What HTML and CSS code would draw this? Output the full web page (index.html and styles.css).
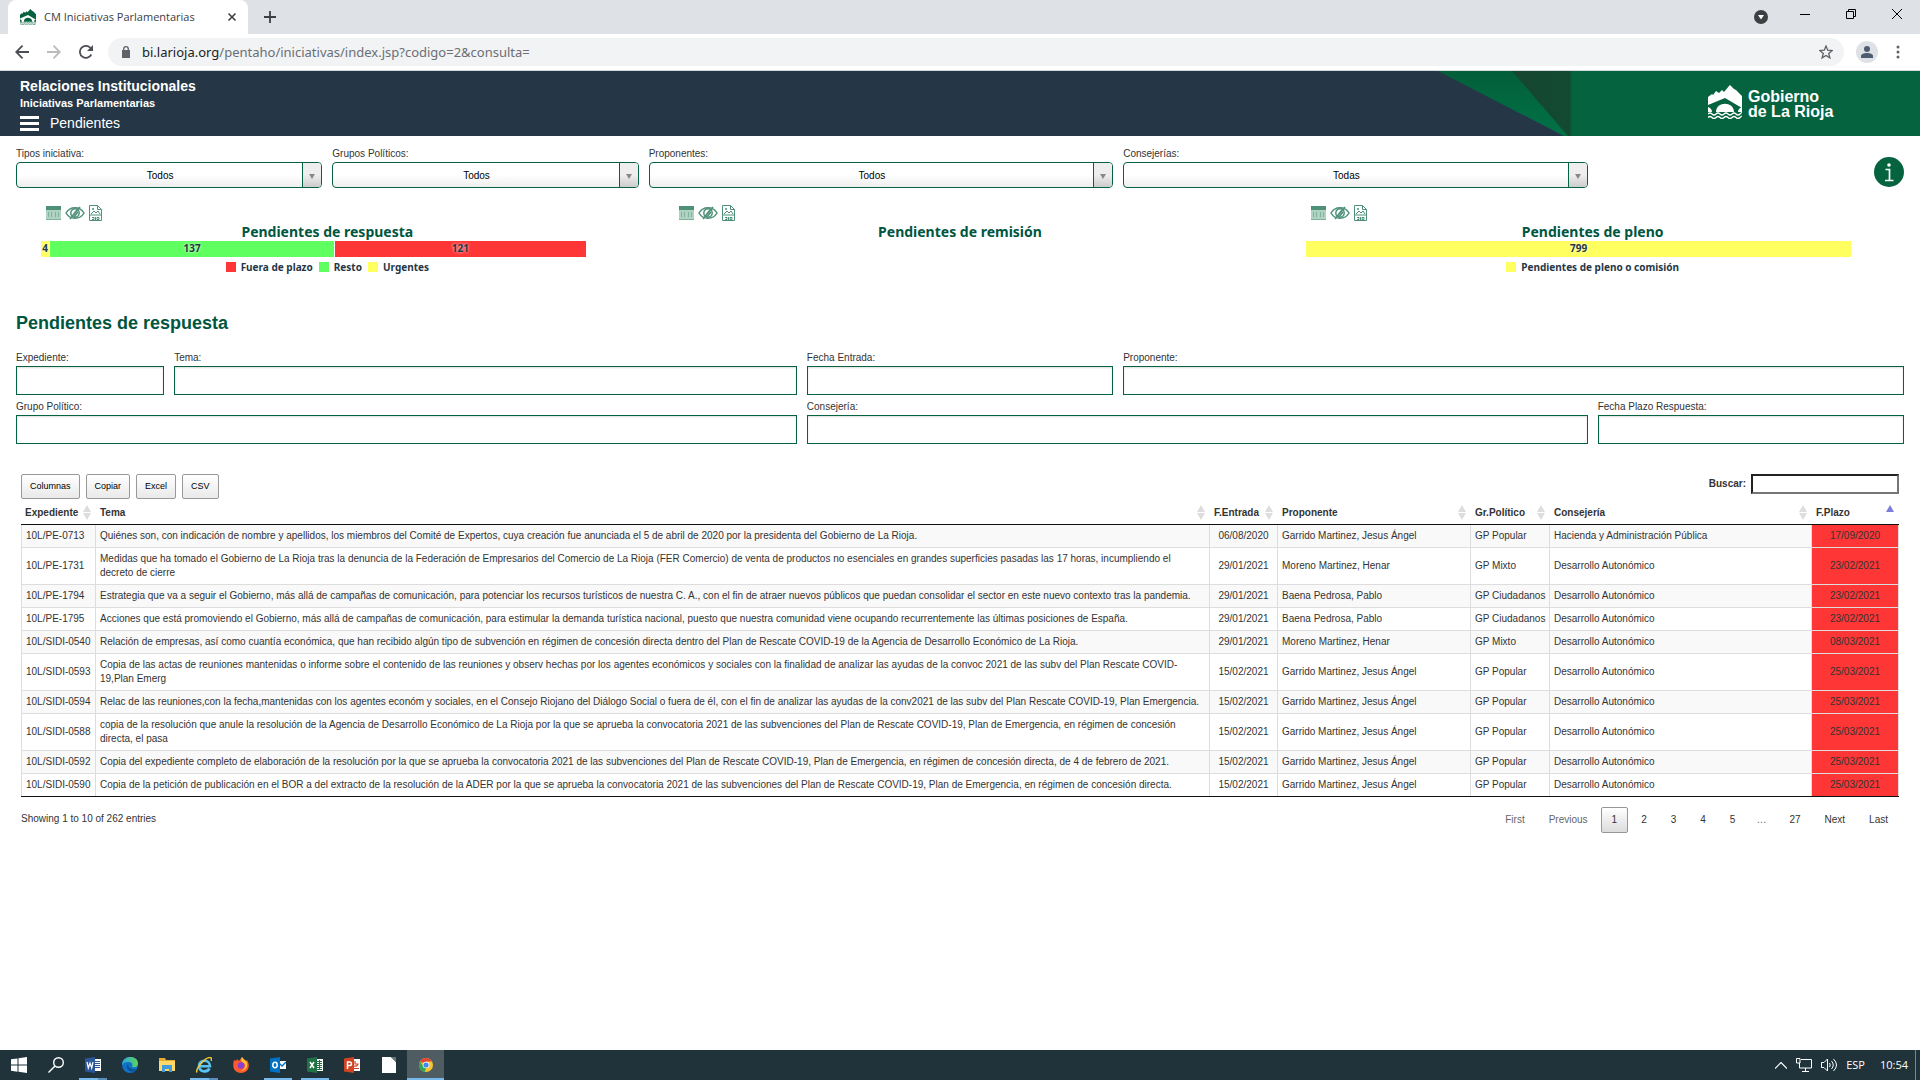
FILE: index.html
```html
<!DOCTYPE html>
<html lang="es">
<head>
<meta charset="utf-8">
<meta name="viewport" content="width=device-width, initial-scale=1">
<title>CM Iniciativas Parlamentarias</title>
<link rel="stylesheet" href="styles.css">
</head>
<body>
<svg class="sprite" width="0" height="0" aria-hidden="true">
  <symbol id="i-table" viewBox="0 0 15 16"><path fill="#8fc0aa" d="M0 2h15v13H0z"/><path fill="#046240" d="M0 1h15v4H0z"/><path fill="#4c9273" d="M2 7h1v5H2zM5 7h1v5H5zM9 7h1v5H9zM12 7h1v5h-1zM0 14h15v1H0z"/></symbol>
  <symbol id="i-eye" viewBox="0 0 20 16"><g fill="none" stroke="#046240" stroke-width="1.500"><path d="M1 8c4-7 14-7 18 0-4 7-14 7-18 0z"/><circle cx="10" cy="8" r="4.200"/><path d="M5 14 15 2M8 10l4-5M9 12l4-5"/></g></symbol>
  <symbol id="i-doc" viewBox="0 0 13 16"><path fill="none" stroke="#046240" d="M.5.5h8l4 4v11H.5zM8.500.5v4h4M2 9l3-3 2 2 2-2 2 3M.5 10h12M3 12.500h2v2H3M6.500 12v3M8 12.500h2v2H8z"/><circle cx="4" cy="4" r="1" fill="#046240"/></symbol>
  <symbol id="i-rioja" viewBox="0 0 34 34"><path d="M0 12l4-3 1 1 3-4 3 2 3-3 2 2 5-6 1-1 4 4 2 1 6 6v12L17 13 0 20z"/><path d="M8 27c0-11 18-11 18 0zM0 22c3 1 4 3 4 5H0zM34 22c-3 1-4 3-4 5h4z"/><path fill="none" stroke="currentColor" stroke-width="1.300" d="M0 29q2-2 4 0t4 0 4 0 4 0 4 0 4 0 4 0 4 0 2-1M0 32.500q2-2 4 0t4 0 4 0 4 0 4 0 4 0 4 0 4 0 2-1"/></symbol>
</svg>

<div class="tabstrip">
  <div class="tab">
    <svg class="favicon" viewBox="0 0 34 34"><use href="#i-rioja"/></svg>
    <span class="tab-title">CM Iniciativas Parlamentarias</span>
    <button class="plain" type="button" aria-label="Cerrar pestaña"><svg width="10" height="10" viewBox="0 0 10 10"><path d="M1.500 1.500l7 7M8.500 1.500l-7 7" stroke="#3c4043" stroke-width="1.600"/></svg></button>
  </div>
  <button class="plain new-tab" type="button" aria-label="Nueva pestaña"><svg width="12" height="12" viewBox="0 0 12 12"><path d="M6 0v12M0 6h12" stroke="#3c4043" stroke-width="1.800"/></svg></button>
  <div class="window-controls">
    <button class="plain tab-search" type="button" aria-label="Buscar pestañas"><svg width="14" height="14" viewBox="0 0 14 14"><circle cx="7" cy="7" r="7" fill="#3c4043"/><path d="M4 5h6L7 9.500z" fill="#fff"/></svg></button>
    <div class="captions">
      <button class="plain" type="button" aria-label="Minimizar"><svg width="10" height="10" viewBox="0 0 10 10"><path d="M0 5.500h10" stroke="#000"/></svg></button>
      <button class="plain" type="button" aria-label="Restaurar"><svg width="10" height="10" viewBox="0 0 10 10"><path d="M.5 2.500h7v7h-7zM2.500 2.500v-2h7v7h-2" fill="none" stroke="#000"/></svg></button>
      <button class="plain" type="button" aria-label="Cerrar"><svg width="10" height="10" viewBox="0 0 10 10"><path d="M0 0l10 10M10 0L0 10" stroke="#000"/></svg></button>
    </div>
  </div>
</div>
<div class="toolbar">
  <div class="nav-buttons">
    <button class="plain" type="button" aria-label="Atrás"><svg width="14" height="14" viewBox="0 0 14 14" fill="none" stroke="#4b4f54" stroke-width="1.800"><path d="M14 7H1M7.500.7L1.200 7l6.300 6.300"/></svg></button>
    <button class="plain" type="button" aria-label="Adelante"><svg width="14" height="14" viewBox="0 0 14 14" fill="none" stroke="#babcbe" stroke-width="1.800"><path d="M0 7h13M6.500.7L12.800 7l-6.300 6.300"/></svg></button>
    <button class="plain" type="button" aria-label="Recargar"><svg width="14" height="14" viewBox="0 0 14 14"><path d="M12.300 9.500A6 6 0 1 1 11.500 3" fill="none" stroke="#4b4f54" stroke-width="1.800"/><path d="M14 0v6H8z" fill="#4b4f54"/></svg></button>
  </div>
  <div class="address">
    <svg width="8" height="12" viewBox="0 0 8 12"><path d="M0 4h8v8H0z" fill="#5f6368"/><path d="M1.700 5V3a2.300 2.300 0 0 1 4.600 0v2" fill="none" stroke="#5f6368" stroke-width="1.300"/></svg>
    <span class="url"><b>bi.larioja.org</b>/pentaho/iniciativas/index.jsp?codigo=2&amp;consulta=</span>
    <button class="plain" type="button" aria-label="Favorito"><svg width="14" height="14" viewBox="0 0 14 14"><path d="M7 1l1.700 4.200 4.500.3-3.500 2.900 1.200 4.500L7 10.400l-3.900 2.500 1.200-4.500L.8 5.500l4.500-.3z" fill="none" stroke="#5f6368" stroke-width="1.300"/></svg></button>
  </div>
  <div class="nav-buttons">
    <button class="plain" type="button" aria-label="Perfil"><svg width="22" height="22" viewBox="0 0 22 22"><circle cx="11" cy="11" r="11" fill="#dee1e6"/><circle cx="11" cy="8" r="3" fill="#4f5b6e"/><path d="M5 17v-2c0-4 12-4 12 0v2z" fill="#4f5b6e"/></svg></button>
    <button class="plain" type="button" aria-label="Menú"><svg width="4" height="14" viewBox="0 0 4 14" fill="#5f6368"><circle cx="2" cy="2" r="1.500"/><circle cx="2" cy="7" r="1.500"/><circle cx="2" cy="12" r="1.500"/></svg></button>
  </div>
</div>

<header class="banner">
  <div class="banner-text">
    <h1>Relaciones Institucionales</h1>
    <h2>Iniciativas Parlamentarias</h2>
    <button class="plain menu" type="button"><svg width="19" height="15" viewBox="0 0 19 15"><path d="M0 0h19v3H0zM0 6h19v3H0zM0 12h19v3H0z" fill="#fff"/></svg>Pendientes</button>
  </div>
  <svg class="banner-art" width="135" height="65" viewBox="0 0 135 65">
    <defs>
      <linearGradient id="g1" x1="0" y1="0" x2="0" y2="1"><stop offset="0" stop-color="#025f38"/><stop offset="1" stop-color="#017248"/></linearGradient>
      <linearGradient id="g2" x1="0" y1="0" x2="1" y2="0"><stop offset="0" stop-color="#17462f"/><stop offset=".94" stop-color="#124a31"/><stop offset="1" stop-color="#05643f"/></linearGradient>
    </defs>
    <path d="M0 0h135v65h-9z" fill="url(#g1)"/><path d="M74 0h61v65h-5z" fill="url(#g2)"/>
  </svg>
  <div class="brand"><svg width="34" height="34" viewBox="0 0 34 34"><use href="#i-rioja"/></svg><span>Gobierno<br>de La Rioja</span></div>
</header>

<main>
  <form class="grid filters">
    <div class="c2"><label for="tipos">Tipos iniciativa:</label><div class="select"><select id="tipos"><option>Todos</option></select></div></div>
    <div class="c2"><label for="grupos">Grupos Políticos:</label><div class="select"><select id="grupos"><option>Todos</option></select></div></div>
    <div class="c3"><label for="proponentes">Proponentes:</label><div class="select"><select id="proponentes"><option>Todos</option></select></div></div>
    <div class="c3"><label for="consejerias">Consejerías:</label><div class="select"><select id="consejerias"><option>Todas</option></select></div></div>
    <div class="c2 info"><button class="plain" type="button" aria-label="Información"><svg width="30" height="30" viewBox="0 0 30 30"><circle cx="15" cy="15" r="15" fill="#05643f"/><circle cx="15" cy="8" r="1.800" fill="#fff"/><path d="M11.500 12.500h4V23M11 23.500h8.500" fill="none" stroke="#fff" stroke-width="1.700"/></svg></button></div>
  </form>

  <section class="grid charts">
    <div class="c4 chart">
      <div class="tools"><button class="plain" type="button" aria-label="Tabla"><svg width="15" height="16"><use href="#i-table"/></svg></button><button class="plain" type="button" aria-label="Ver"><svg width="20" height="16"><use href="#i-eye"/></svg></button><button class="plain" type="button" aria-label="Exportar"><svg width="13" height="16"><use href="#i-doc"/></svg></button></div>
      <h3>Pendientes de respuesta</h3>
      <div class="bar"><span class="yellow" style="flex-grow:4">4</span><span class="green" style="flex-grow:137">137</span><span class="red" style="flex-grow:121">121</span></div>
      <ul class="legend"><li><i class="red"></i>Fuera de plazo</li><li><i class="green"></i>Resto</li><li><i class="yellow"></i>Urgentes</li></ul>
    </div>
    <div class="c4 chart">
      <div class="tools"><button class="plain" type="button" aria-label="Tabla"><svg width="15" height="16"><use href="#i-table"/></svg></button><button class="plain" type="button" aria-label="Ver"><svg width="20" height="16"><use href="#i-eye"/></svg></button><button class="plain" type="button" aria-label="Exportar"><svg width="13" height="16"><use href="#i-doc"/></svg></button></div>
      <h3>Pendientes de remisión</h3>
    </div>
    <div class="c4 chart">
      <div class="tools"><button class="plain" type="button" aria-label="Tabla"><svg width="15" height="16"><use href="#i-table"/></svg></button><button class="plain" type="button" aria-label="Ver"><svg width="20" height="16"><use href="#i-eye"/></svg></button><button class="plain" type="button" aria-label="Exportar"><svg width="13" height="16"><use href="#i-doc"/></svg></button></div>
      <h3>Pendientes de pleno</h3>
      <div class="bar"><span class="yellow" style="flex-grow:799">799</span></div>
      <ul class="legend"><li><i class="yellow"></i>Pendientes de pleno o comisión</li></ul>
    </div>
  </section>

  <h2 class="section-title">Pendientes de respuesta</h2>

  <form class="grid fields">
    <div class="c1"><label for="f-exp">Expediente:</label><input id="f-exp" type="text"></div>
    <div class="c4"><label for="f-tema">Tema:</label><input id="f-tema" type="text"></div>
    <div class="c2"><label for="f-ent">Fecha Entrada:</label><input id="f-ent" type="text"></div>
    <div class="c5"><label for="f-prop">Proponente:</label><input id="f-prop" type="text"></div>
    <div class="c5"><label for="f-grupo">Grupo Político:</label><input id="f-grupo" type="text"></div>
    <div class="c5"><label for="f-cons">Consejería:</label><input id="f-cons" type="text"></div>
    <div class="c2"><label for="f-plazo">Fecha Plazo Respuesta:</label><input id="f-plazo" type="text"></div>
  </form>

  <section class="listing">
    <div class="actions">
      <button class="btn" type="button">Columnas</button><button class="btn" type="button">Copiar</button><button class="btn" type="button">Excel</button><button class="btn" type="button">CSV</button>
      <div class="search"><label for="buscar">Buscar:</label><input id="buscar" type="search"></div>
    </div>
    <table>
      <colgroup><col class="w-exp"><col><col class="w-ent"><col class="w-prop"><col class="w-grupo"><col class="w-cons"><col class="w-plazo"></colgroup>
      <thead><tr><th class="sort">Expediente</th><th class="sort">Tema</th><th class="sort">F.Entrada</th><th class="sort">Proponente</th><th class="sort">Gr.Político</th><th class="sort">Consejería</th><th class="sort asc">F.Plazo</th></tr></thead>
      <tbody>
        <tr><td>10L/PE-0713</td><td>Quiénes son, con indicación de nombre y apellidos, los miembros del Comité de Expertos, cuya creación fue anunciada el 5 de abril de 2020 por la presidenta del Gobierno de La Rioja.</td><td>06/08/2020</td><td>Garrido Martinez, Jesus Ángel</td><td>GP Popular</td><td>Hacienda y Administración Pública</td><td>17/09/2020</td></tr>
        <tr><td>10L/PE-1731</td><td>Medidas que ha tomado el Gobierno de La Rioja tras la denuncia de la Federación de Empresarios del Comercio de La Rioja (FER Comercio) de venta de productos no esenciales en grandes superficies pasadas las 17 horas, incumpliendo el decreto de cierre</td><td>29/01/2021</td><td>Moreno Martinez, Henar</td><td>GP Mixto</td><td>Desarrollo Autonómico</td><td>23/02/2021</td></tr>
        <tr><td>10L/PE-1794</td><td>Estrategia que va a seguir el Gobierno, más allá de campañas de comunicación, para potenciar los recursos turísticos de nuestra C. A., con el fin de atraer nuevos públicos que puedan consolidar el sector en este nuevo contexto tras la pandemia.</td><td>29/01/2021</td><td>Baena Pedrosa, Pablo</td><td>GP Ciudadanos</td><td>Desarrollo Autonómico</td><td>23/02/2021</td></tr>
        <tr><td>10L/PE-1795</td><td>Acciones que está promoviendo el Gobierno, más allá de campañas de comunicación, para estimular la demanda turística nacional, puesto que nuestra comunidad viene ocupando recurrentemente las últimas posiciones de España.</td><td>29/01/2021</td><td>Baena Pedrosa, Pablo</td><td>GP Ciudadanos</td><td>Desarrollo Autonómico</td><td>23/02/2021</td></tr>
        <tr><td>10L/SIDI-0540</td><td>Relación de empresas, así como cuantía económica, que han recibido algún tipo de subvención en régimen de concesión directa dentro del Plan de Rescate COVID-19 de la Agencia de Desarrollo Económico de La Rioja.</td><td>29/01/2021</td><td>Moreno Martinez, Henar</td><td>GP Mixto</td><td>Desarrollo Autonómico</td><td>08/03/2021</td></tr>
        <tr><td>10L/SIDI-0593</td><td>Copia de las actas de reuniones mantenidas o informe sobre el contenido de las reuniones y observ hechas por los agentes económicos y sociales con la finalidad de analizar las ayudas de la convoc 2021 de las subv del Plan Rescate COVID-19,Plan Emerg</td><td>15/02/2021</td><td>Garrido Martinez, Jesus Ángel</td><td>GP Popular</td><td>Desarrollo Autonómico</td><td>25/03/2021</td></tr>
        <tr><td>10L/SIDI-0594</td><td>Relac de las reuniones,con la fecha,mantenidas con los agentes económ y sociales, en el Consejo Riojano del Diálogo Social o fuera de él, con el fin de analizar las ayudas de la conv2021 de las subv del Plan Rescate COVID-19, Plan Emergencia.</td><td>15/02/2021</td><td>Garrido Martinez, Jesus Ángel</td><td>GP Popular</td><td>Desarrollo Autonómico</td><td>25/03/2021</td></tr>
        <tr><td>10L/SIDI-0588</td><td>copia de la resolución que anule la resolución de la Agencia de Desarrollo Económico de La Rioja por la que se aprueba la convocatoria 2021 de las subvenciones del Plan de Rescate COVID-19, Plan de Emergencia, en régimen de concesión directa, el pasa</td><td>15/02/2021</td><td>Garrido Martinez, Jesus Ángel</td><td>GP Popular</td><td>Desarrollo Autonómico</td><td>25/03/2021</td></tr>
        <tr><td>10L/SIDI-0592</td><td>Copia del expediente completo de elaboración de la resolución por la que se aprueba la convocatoria 2021 de las subvenciones del Plan de Rescate COVID-19, Plan de Emergencia, en régimen de concesión directa, de 4 de febrero de 2021.</td><td>15/02/2021</td><td>Garrido Martinez, Jesus Ángel</td><td>GP Popular</td><td>Desarrollo Autonómico</td><td>25/03/2021</td></tr>
        <tr><td>10L/SIDI-0590</td><td>Copia de la petición de publicación en el BOR a del extracto de la resolución de la ADER por la que se aprueba la convocatoria 2021 de las subvenciones del Plan de Rescate COVID-19, Plan de Emergencia, en régimen de concesión directa.</td><td>15/02/2021</td><td>Garrido Martinez, Jesus Ángel</td><td>GP Popular</td><td>Desarrollo Autonómico</td><td>25/03/2021</td></tr>
      </tbody>
    </table>
    <div class="table-foot">
      <span>Showing 1 to 10 of 262 entries</span>
      <nav class="pages"><a class="off" href="#">First</a><a class="off" href="#">Previous</a><a class="current" href="#">1</a><a href="#">2</a><a href="#">3</a><a href="#">4</a><a href="#">5</a><span class="dots">…</span><a href="#">27</a><a href="#">Next</a><a href="#">Last</a></nav>
    </div>
  </section>
</main>

<footer class="taskbar">
  <button class="plain app" type="button" aria-label="Inicio"><svg width="16" height="16" viewBox="0 0 16 16" fill="#fff"><path d="M0 2.300L6.500 1.400v6.200H0zM7.500 1.200L16 0v7.600H7.500zM0 8.500h6.500v6.200L0 13.800zM7.500 8.500H16V16l-8.500-1.200z"/></svg></button>
  <button class="plain app" type="button" aria-label="Buscar"><svg width="16" height="16" viewBox="0 0 16 16" fill="none" stroke="#fff" stroke-width="1.400"><circle cx="10.500" cy="5.500" r="4.800"/><path d="M7 9L.5 15.500"/></svg></button>
  <button class="plain app open multi" type="button" aria-label="Word"><svg width="16" height="16" viewBox="0 0 16 16"><path d="M8 2h8v12H8z" fill="#fff"/><path d="M10 4.500h5M10 6.500h5M10 8.500h5M10 10.500h5" stroke="#2b579a"/><path d="M0 1.500L10 0v16L0 14.500z" fill="#2b579a"/><path d="M2 5l1.300 6L5 6l1.700 5L8 5" fill="none" stroke="#fff" stroke-width="1.200"/></svg></button>
  <button class="plain app" type="button" aria-label="Edge"><svg width="16" height="16" viewBox="0 0 16 16"><defs><linearGradient id="e1"><stop offset="0" stop-color="#2aa8e0"/><stop offset="1" stop-color="#5fd35b"/></linearGradient></defs><circle cx="8" cy="8" r="8" fill="#1171c4"/><path d="M0 8C0-2.500 16-2.500 16 6.500c0 4-5 4.500-6 3 1.500-3-1-5-4-4.500C3 5.300 1 6 0 8z" fill="url(#e1)"/><path d="M6 7c-3 4 1 8 5 7.500 2-.3 3-1.300 3.700-2.500C10 13.500 6 11 6 7z" fill="#0c4f93"/></svg></button>
  <button class="plain app" type="button" aria-label="Explorador"><svg width="16" height="16" viewBox="0 0 16 16"><path d="M0 1h6l1 2h9v11H0z" fill="#e8a92c"/><path d="M0 4h16v10H0z" fill="#ffd867"/><path d="M3 8h10v7h-3v-3H6v3H3z" fill="#3f9bdc"/></svg></button>
  <button class="plain app open multi" type="button" aria-label="Internet Explorer"><svg width="16" height="16" viewBox="0 0 16 16" fill="none"><path d="M3 9.300h11C14 2 3 2 3 9c0 6 8 7 10.500 2.500" stroke="#5bc3f2" stroke-width="2.600"/><path d="M1 15.500C-1 12 10-1 15 .8c1 .6.600 2-.1 3" stroke="#f5c431" stroke-width="1.500"/></svg></button>
  <button class="plain app" type="button" aria-label="Firefox"><svg width="16" height="16" viewBox="0 0 16 16"><path d="M1 3l2 1 1-2 2 2 3-4c1 2 2 3 4 4l1-1c4 6 1 13-6 13S-1 10 1 3z" fill="#ff5a2f"/><path d="M9 0c1 2 4 3 5 6 1 4-2 8-6 8 6-3 5-8 1-9-1-2-1-3 0-5z" fill="#ffc532"/><circle cx="8" cy="8.500" r="3.300" fill="#8a3ed6"/></svg></button>
  <button class="plain app open" type="button" aria-label="Outlook"><svg width="16" height="16" viewBox="0 0 16 16"><path d="M8 4h8v8H8z" fill="#fff"/><path d="M9 6l3 3 4-4" fill="none" stroke="#0072c6" stroke-width="1.300"/><path d="M0 1.500L10 0v16L0 14.500z" fill="#0072c6"/><ellipse cx="5" cy="8" rx="2.200" ry="2.700" fill="none" stroke="#fff" stroke-width="1.500"/></svg></button>
  <button class="plain app open" type="button" aria-label="Excel"><svg width="16" height="16" viewBox="0 0 16 16"><path d="M8 2h8v12H8z" fill="#fff"/><path d="M10 4.500h5M10 6.500h5M10 8.500h5M10 10.500h5M10 12.500h5M12.500 3v10" stroke="#217346"/><path d="M0 1.500L10 0v16L0 14.500z" fill="#217346"/><path d="M3 5l4 6M7 5l-4 6" stroke="#fff" stroke-width="1.500"/></svg></button>
  <button class="plain app" type="button" aria-label="PowerPoint"><svg width="16" height="16" viewBox="0 0 16 16"><path d="M8 2h8v12H8z" fill="#fff"/><path d="M11 4v3h3a3 3 0 0 1-4 2M10 11.500h5" fill="none" stroke="#d04423" stroke-width="1.200"/><path d="M0 1.500L10 0v16L0 14.500z" fill="#d04423"/><path d="M3.500 12V5H6c2 0 2 3.500 0 3.500H3.500" fill="none" stroke="#fff" stroke-width="1.500"/></svg></button>
  <button class="plain app" type="button" aria-label="Documento"><svg width="16" height="16" viewBox="0 0 16 16"><path d="M1 0h9l5 5v11H1z" fill="#fff"/><path d="M10 0h5v5z" fill="#68757a"/></svg></button>
  <button class="plain app open active" type="button" aria-label="Chrome"><svg width="14" height="14" viewBox="0 0 14 14"><circle cx="7" cy="7" r="7" fill="#f7c52d"/><path d="M7 7L1 3.300A7 7 0 0 1 13 3.500H7z" fill="#e2463a"/><path d="M1 3.300L5 9l2 1-1.200 4A7 7 0 0 1 1 3.300z" fill="#34a455"/><circle cx="7" cy="7" r="3.300" fill="#fff"/><circle cx="7" cy="7" r="2.600" fill="#4285f4"/></svg></button>
  <div class="tray">
    <svg width="12" height="7" viewBox="0 0 12 7"><path d="M0 6.500l6-6 6 6" fill="none" stroke="#fff" stroke-width="1.200"/></svg>
    <svg width="16" height="14" viewBox="0 0 16 14" fill="none" stroke="#fff"><path d="M5 1.500h10.500v8.500H3.500V5M9.500 10v3M6 13.500h7M.5.5h3.500V5H.5z"/></svg>
    <svg width="16" height="14" viewBox="0 0 16 14" fill="none" stroke="#fff"><path d="M.5 4.500h2.500L6.500 1v12L3 9.500H.5zM8.500 5q1.500 2 0 4M10.500 3q3.500 4 0 8M12.500 1q6 6 0 12"/></svg>
    <span>ESP</span><time>10:54</time>
  </div>
</footer>
</body>
</html>
```
FILE: styles.css
```css
* { box-sizing: border-box; }
body { margin: 0; min-height: 100vh; display: flex; flex-direction: column; background: #fff; color: #333; font: 10px/14px "Liberation Sans", Arial, sans-serif; }
h1, h2, h3, ul { margin: 0; padding: 0; }
svg { display: block; flex: none; }
.sprite { position: absolute; }
button, input, select { font: inherit; color: inherit; }
.plain { display: flex; align-items: center; padding: 0; border: 0; background: none; }

/* Browser window */
.tabstrip { display: flex; align-items: center; height: 34px; background: #dee1e6; padding-left: 8px; font-family: "Open Sans", "Noto Sans", sans-serif; }
.tab { display: flex; align-items: center; width: 240px; height: 34px; padding: 0 11px 0 12px; gap: 8px; background: #fff; border-radius: 8px 8px 0 0; color: #3c4043; font-size: 11px; }
.favicon { width: 16px; height: 16px; fill: #05643f; color: #05643f; }
.tab-title { flex: 1; white-space: nowrap; }
.new-tab { margin-left: 16px; }
.window-controls { display: flex; align-items: center; gap: 32px; margin-left: auto; padding-right: 18px; }
.captions { display: flex; gap: 36px; padding-bottom: 6px; }
.toolbar { display: flex; align-items: center; height: 37px; padding: 0 20px 0 15px; border-bottom: 1px solid #d5d8dc; }
.nav-buttons { display: flex; align-items: center; gap: 18px; }
.address { display: flex; flex: 1; align-items: center; gap: 12px; height: 28px; margin: 0 12px 0 15px; padding: 0 11px 0 14px; border-radius: 14px; background: #f1f3f4; }
.url { flex: 1; color: #6b6f74; font: 13px/18px "Noto Sans", "Open Sans", sans-serif; }
.url b { font-weight: 400; color: #202124; }

/* Banner */
.banner { display: flex; align-items: stretch; min-height: 65px; background: #253746; color: #fff; }
.banner-text { flex: 1; padding: 7px 0 0 20px; }
.banner h1 { font-size: 14px; line-height: 17px; }
.banner h2 { font-size: 11px; line-height: 17px; }
.menu { gap: 11px; font-size: 14px; line-height: 22px; }
.brand { display: flex; align-items: center; gap: 6px; width: 347px; padding-left: 135px; background: #05643f; fill: #fff; font-size: 16px; font-weight: 700; line-height: 15px; }
.brand svg { margin-bottom: 4px; }

/* Twelve-column grid */
main { flex: 1; padding: 11px 16px; }
.grid { display: grid; grid-template-columns: repeat(12, minmax(0, 1fr)); column-gap: 10px; row-gap: 5px; }
.c1 { grid-column: span 1; }
.c2 { grid-column: span 2; }
.c3 { grid-column: span 3; }
.c4 { grid-column: span 4; }
.c5 { grid-column: span 5; }
label { display: block; margin-bottom: 1px; }

.select { position: relative; height: 26px; }
.select select { appearance: none; width: 100%; height: 26px; padding: 2px 18px 0 0; border: 1px solid #05643f; border-radius: 4px; background: linear-gradient(#fff 50%, #eee); color: #000; text-align: center; text-align-last: center; }
.select::before { content: ""; position: absolute; top: 1px; right: 1px; bottom: 1px; width: 18px; border-left: 1px solid #05643f; border-radius: 0 3px 3px 0; background: linear-gradient(#eee 50%, #ccc); pointer-events: none; }
.select::after { content: ""; position: absolute; top: 12px; right: 7px; border: 3px solid transparent; border-top: 5px solid #888; border-bottom: 0; pointer-events: none; }
.info { display: flex; justify-content: flex-end; align-items: flex-start; padding-top: 10px; }

/* Charts */
.charts { margin-top: 17px; min-height: 106px; font-family: "Noto Sans", "Open Sans", sans-serif; font-weight: 700; color: #253746; }
.tools { display: flex; gap: 4px; padding-left: 30px; opacity: .7; }
.chart h3 { margin-top: 2px; font-size: 14px; line-height: 18px; text-align: center; color: #00563f; }
.bar { display: flex; gap: 1px; height: 16px; margin: 0 53px 0 25px; }
.bar span { flex: 0 1 0; line-height: 15px; text-align: center; text-shadow: 0 0 3px #fff; }
.yellow { background: #ffff5f; }
.green { background: #5fff5f; }
.red { background: #ff3636; }
.legend { display: flex; justify-content: center; gap: 6px; margin-top: 3px; list-style: none; }
.legend li { display: flex; align-items: center; gap: 5px; }
.legend i { width: 10px; height: 10px; }

/* Field filters */
.section-title { margin-bottom: 16px; font-size: 18px; line-height: 24px; color: #00563f; }
.fields input { display: block; width: 100%; height: 29px; padding: 0 6px; border: 1px solid #05643f; background: #fff; box-shadow: inset 0 1px 2px #ddd; }

/* Listing */
.listing { margin-top: 30px; padding: 0 5px; }
.actions { display: flex; align-items: flex-start; gap: 6px; }
.btn { height: 25px; padding: 0 8px 1px; border: 1px solid #999; border-radius: 2px; background: linear-gradient(#fff, #e9e9e9); color: #000; font-size: 9px; }
.search { display: flex; align-items: center; gap: 5px; margin-left: auto; font-weight: 700; }
.search input { width: 148px; height: 20px; border: 2px inset #767676; border-radius: 0; background: #fff; }
table { width: 100%; margin-top: 2px; border-collapse: separate; border-spacing: 0; border-bottom: 1px solid #111; table-layout: fixed; }
.w-exp { width: 75px; }
.w-ent { width: 68px; }
.w-prop { width: 193px; }
.w-grupo { width: 79px; }
.w-cons { width: 262px; }
.w-plazo { width: 87px; }
th { position: relative; height: 24px; padding: 0 4px; border-bottom: 1px solid #111; text-align: left; }
.sort::before, .sort::after { content: ""; position: absolute; right: 5px; border: 4px solid transparent; }
.sort::before { top: 4px; border-top: 0; border-bottom: 7px solid #ddd; }
.sort::after { top: 12px; border-bottom: 0; border-top: 7px solid #ddd; }
.asc::before { border-bottom-color: #7a7fdc; }
.asc::after { display: none; }
td { padding: 4px; border-top: 1px solid #ddd; border-right: 1px solid #ddd; }
td:first-child { border-left: 1px solid #ddd; }
tbody tr:first-child td { border-top: 0; }
tbody tr:nth-child(odd) { background: #f9f9f9; }
td:nth-child(3), td:last-child { text-align: center; }
td:nth-child(5) { padding-right: 0; white-space: nowrap; }
td:last-child { background: #ff3636; }
.table-foot { display: flex; justify-content: space-between; align-items: flex-start; padding-top: 10px; }
.table-foot > span { padding-top: 5px; }
.pages { display: flex; }
.pages a { height: 26px; margin-left: 2px; padding: 5px 10px; border: 1px solid transparent; border-radius: 2px; color: #333; text-decoration: none; }
.dots { padding: 6px 10px; color: #666; }
.pages .off { color: #666; }
.pages .current { border-color: #979797; background: linear-gradient(#fff, #dcdcdc); }

/* Taskbar */
.taskbar { display: flex; height: 30px; background: #20333a; color: #fff; }
.app { width: 37px; justify-content: center; border-bottom: 2px solid transparent; border-top: 2px solid transparent; }
.open { background: linear-gradient(#76b9ed, #76b9ed) center bottom / 28px 2px no-repeat border-box; }
.multi { background: linear-gradient(90deg, #76b9ed 19px, #5a8fbb 19px) center bottom / 28px 2px no-repeat border-box; }
.active { background: linear-gradient(#76b9ed, #76b9ed) center bottom / 37px 2px no-repeat border-box, #4f5c62; }
.tray { display: flex; align-items: center; gap: 9px; margin: 0 4px 0 auto; padding-right: 7px; border-right: 1px solid #7a868a; font: 11px/14px "Open Sans", "Noto Sans", sans-serif; }
.tray time { margin-left: 6px; }
```
